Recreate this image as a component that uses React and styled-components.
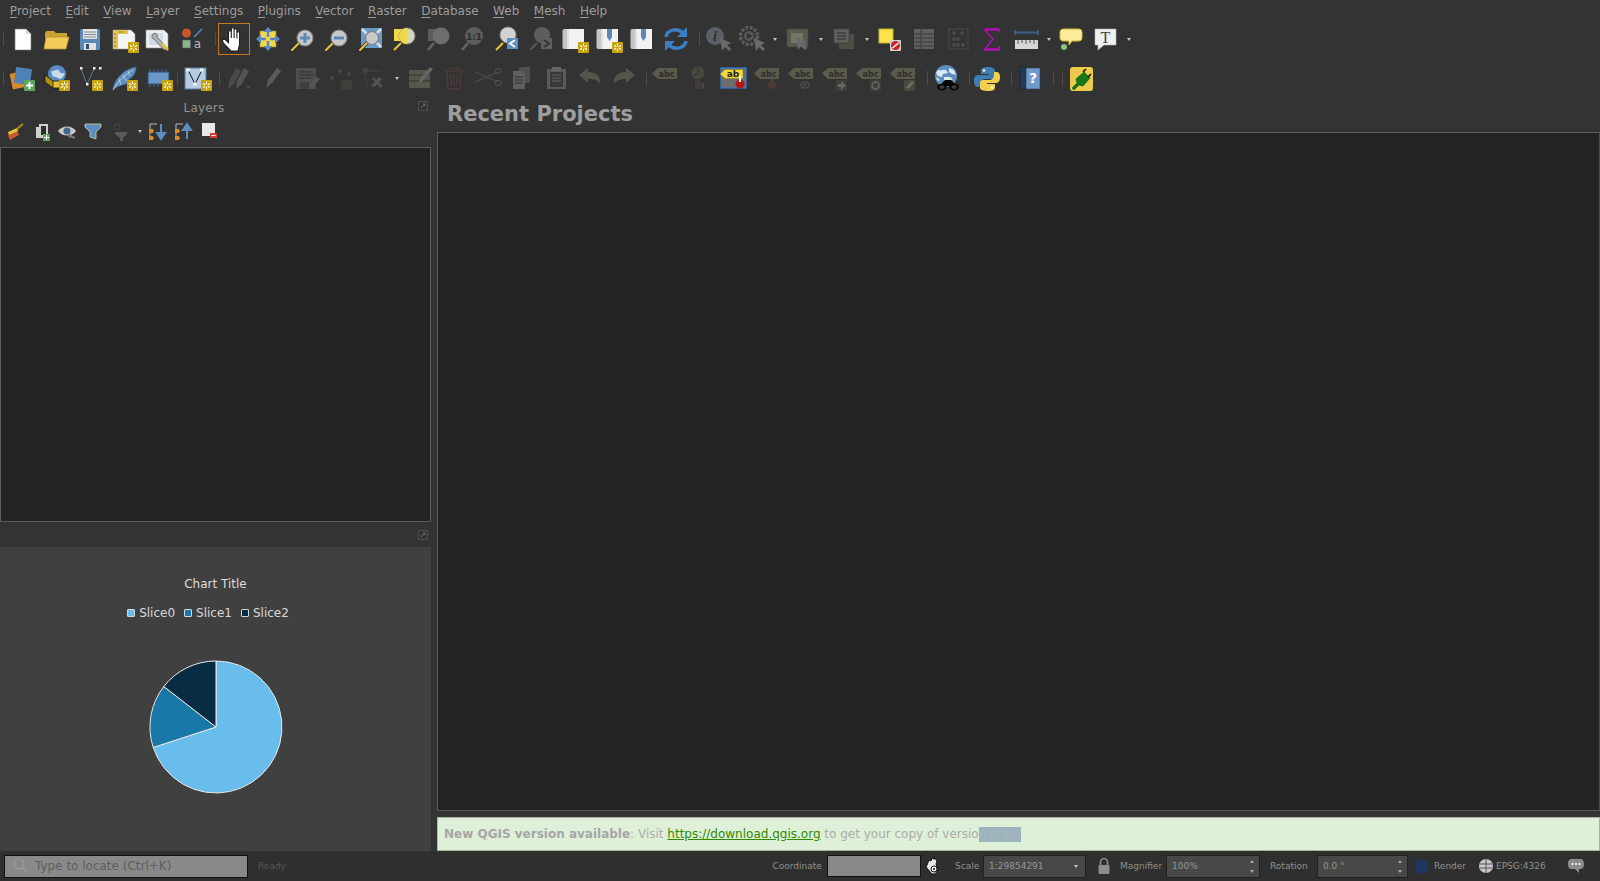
import React from "react";
import styled, { createGlobalStyle } from "styled-components";

const GlobalStyle = createGlobalStyle`
  html, body {
    margin: 0;
    padding: 0;
    height: 100%;
    background: #333333;
    font-family: "DejaVu Sans", sans-serif;
    overflow: hidden;
  }
`;

const Window = styled.div`
  width: 1600px;
  height: 881px;
  display: flex;
  flex-direction: column;
  background: #333333;
  color: #a0a0a0;
`;

const MenuBar = styled.div`
  height: 20px;
  box-sizing: border-box;
  padding-top: 1px;
  display: flex;
  align-items: center;
  padding-left: 2.600px;
  font-size: 12px;
`;

const MenuItem = styled.span`
  padding: 0 7.250px;
  color: #9c9c9c;
  u { text-underline-offset: 2px; }
`;

const ToolRow = styled.div`
  height: ${(p) => p.$h}px;
  display: flex;
  align-items: center;
`;

const ToolSlot = styled.div`
  width: ${(p) => p.$w || 34}px;
  height: 32px;
  flex: none;
  display: flex;
  align-items: center;
  justify-content: center;
  box-sizing: border-box;
  border: ${(p) => (p.$active ? "1px solid #c67a1b" : "none")};
  margin-right: ${(p) => (p.$active ? 1 : 0)}px;
  margin-left: ${(p) => (p.$active ? 1 : 0)}px;
  svg { display: block; flex: none; }
`;

const Sep = styled.div`
  width: ${(p) => p.$w}px;
  height: 14px;
  flex: none;
  display: flex;
  justify-content: flex-end;
  &::after {
    content: "";
    width: 1px;
    height: 14px;
    margin-right: 1px;
    background: #4c4c4c;
  }
`;

const Drop = styled.div`
  width: ${(p) => p.$w || 12}px;
  flex: none;
  display: flex;
  justify-content: center;
  &::after {
    content: "";
    border-left: 2px solid transparent;
    border-right: 2px solid transparent;
    border-top: 3px solid #c4c4c4;
  }
`;

const Workspace = styled.div`
  flex: 1;
  min-height: 0;
  display: flex;
`;

const Dock = styled.div`
  width: 431px;
  flex: none;
  display: flex;
  flex-direction: column;
`;

const DockHead = styled.div`
  height: 21px;
  box-sizing: border-box;
  padding-bottom: 1px;
  display: flex;
  align-items: center;
`;

const DockTitle = styled.span`
  flex: 1;
  text-align: center;
  font-size: 12px;
  color: #929292;
  padding-right: 7px;
  letter-spacing: 0.2px;
`;

const FloatBtn = styled.div`
  width: 16px;
  height: 16px;
  align-self: ${(p) => (p.$top ? "flex-start" : "auto")};
  display: flex;
  align-items: center;
  justify-content: center;
`;

const LayerTools = styled.div`
  height: 28px;
  box-sizing: border-box;
  padding-bottom: 4px;
  display: flex;
  align-items: center;
  padding-left: 2px;
`;

const Tree = styled.div`
  height: 375px;
  flex: none;
  box-sizing: border-box;
  background: #232323;
  border: 1px solid #5c5c5c;
`;

const FloatRow = styled.div`
  height: 25px;
  display: flex;
  align-items: center;
  justify-content: flex-end;
`;

const ChartPanel = styled.div`
  flex: 1;
  background: #404040;
  display: flex;
  flex-direction: column;
  align-items: center;
`;

const ChartTitle = styled.div`
  margin-top: 29px;
  height: 16px;
  font-size: 12px;
  line-height: 16px;
  color: #dcdcdc;
`;

const Legend = styled.div`
  margin-top: 13px;
  height: 16px;
  display: flex;
  align-items: center;
  gap: 9px;
  margin-left: -15px;
  font-size: 12px;
  color: #d8d8d8;
`;

const LegendItem = styled.div`
  display: flex;
  align-items: center;
  gap: 4px;
`;

const Swatch = styled.span`
  width: 6px;
  height: 6px;
  border: 1px solid #d0d8dc;
  border-radius: 1px;
  background: ${(p) => p.$c};
`;

const Pie = styled.svg`
  display: block;
  margin-top: 39px;
`;

const Main = styled.div`
  flex: 1;
  min-width: 0;
  margin-left: 6px;
  display: flex;
  flex-direction: column;
`;

const MainTitle = styled.div`
  height: 34px;
  padding-left: 10px;
  display: flex;
  align-items: center;
  font-size: 21px;
  font-weight: 700;
  color: #9e9e9e;
  padding-bottom: 2px;
  box-sizing: border-box;
`;

const ProjectList = styled.div`
  flex: 1;
  background: #232323;
  border: 1px solid #5c5c5c;
  border-right-color: #4a4a4a;
`;

const MessageBar = styled.div`
  margin-top: 6px;
  height: 34px;
  box-sizing: border-box;
  background: #dff0d8;
  border: 1px solid #a6b7a0;
  display: flex;
  align-items: center;
  padding-left: 6px;
  font-size: 12px;
  color: #acacac;
  white-space: pre;
  b { color: #a6a6a6; }
  a { color: #2f8a00; text-decoration: underline; }
`;

const Selected = styled.span`
  background: #9db3be;
  color: #a9b7be;
  height: 15px;
  line-height: 15px;
`;

const StatusBar = styled.div`
  height: 30px;
  flex: none;
  background: #2f2f2f;
  display: flex;
  align-items: center;
  font-size: 9px;
  color: #8f8f8f;
  white-space: nowrap;
  > * { flex: none; }
`;

const Locator = styled.div`
  width: 244px;
  height: 23px;
  margin-left: 4px;
  box-sizing: border-box;
  background: #898989;
  border: 1px solid #111111;
  display: flex;
  align-items: center;
  gap: 6px;
  padding-left: 6px;
  font-size: 12px;
  color: #5f5f5f;
`;

const Ready = styled.span`
  margin-left: 10px;
  width: 27px;
  color: #555555;
`;

const StatusLabel = styled.span`
  width: ${(p) => p.$w}px;
  margin-left: ${(p) => p.$ml || 0}px;
  color: #8f8f8f;
`;

const CoordInput = styled.div`
  width: 94px;
  height: 22px;
  margin-left: 4px;
  box-sizing: border-box;
  background: #888888;
  border: 1px solid #111111;
`;

const Spin = styled.div`
  width: ${(p) => p.$w}px;
  height: 23px;
  margin-left: ${(p) => p.$ml}px;
  box-sizing: border-box;
  background: #484848;
  border: 1px solid #222222;
  display: flex;
  align-items: center;
  justify-content: space-between;
  padding: 0 5px;
  color: #969696;
`;

const SpinArrows = styled.div`
  display: flex;
  flex-direction: column;
  gap: 7px;
  span {
    border-left: 2px solid transparent;
    border-right: 2px solid transparent;
  }
  span:first-child { border-bottom: 3px solid #a8a8a8; }
  span:last-child { border-top: 3px solid #a8a8a8; }
`;

const RenderBox = styled.span`
  width: 12px;
  height: 13px;
  margin-left: 7.500px;
  background: #1f3660;
`;

const StatusIcon = styled.svg`
  flex: none;
  display: block;
  margin-left: ${(p) => p.$ml || 0}px;
`;

const Abc = ({ fill = "#5b5a4d", ink = "#2e2e2e", children, y = 6 }) => (
  <g>
    <path d={`M9 ${y}h19v11H9l-6-5.500z`} fill={fill} />
    <text x="17.500" y={y + 8.500} fontFamily="DejaVu Sans" fontSize="8" fontWeight="700" fill={ink} textAnchor="middle">abc</text>
    {children}
  </g>
);

const Badge = ({ x = 19, y = 18 }) => (
  <g transform={`translate(${x} ${y})`}>
    <rect width="11" height="11" rx="1" fill="#c9a20c" />
    <path d="M5.500 1.500v8M2 3.500l7 4M9 3.500l-7 4" stroke="#fff" strokeWidth="1.100" />
    <circle cx="5.500" cy="5.500" r="1.500" fill="#c9a20c" />
  </g>
);

const Lens = ({ cx = 19, cy = 15, r = 8, fill = "#c9c9c9", edge = "#7d7d7d", handle = "#e8c83a", children }) => (
  <g>
    <path d="M6 27l7-7" stroke="#333" strokeWidth="3.500" strokeLinecap="round" />
    <path d="M6 27l7-7" stroke={handle} strokeWidth="2" strokeLinecap="round" />
    <circle cx={cx} cy={cy} r={r} fill={fill} stroke={edge} strokeWidth="1.200" />
    {children}
  </g>
);

const MapSheet = () => (
  <g>
    <path d="M9 6h17v20H9z" fill="#f2f2f2" />
    <path d="M6 6h4v20H6c-1 0-1.500-1-1.500-2V8c0-1 .5-2 1.500-2z" fill="#c4c4c4" />
    <path d="M9 6h2v20H9z" fill="#e0e0e0" />
  </g>
);

const Pin = () => <path d="M15 6h5v8l-2.500 4-2.500-4z" fill="#5c88b8" />;

const icons = {
  file: (
    <g>
      <path d="M9 6h11l5 5v16H9z" fill="#fff" stroke="#777" strokeWidth=".6" />
      <path d="M20 6v5h5z" fill="#d5d5d5" />
    </g>
  ),
  folder: (
    <g>
      <path d="M5 10l1-2h8l2 2h11v5H5z" fill="#c9a233" />
      <path d="M6 14h23l-3 12H4z" fill="#f1cd58" stroke="#b0902f" strokeWidth=".8" />
    </g>
  ),
  save: (
    <g>
      <rect x="6" y="6" width="20" height="21" rx="1.500" fill="#5c88b8" />
      <rect x="9" y="6" width="14" height="10" fill="#e4e4e4" />
      <path d="M10 9h12M10 11.500h12M10 14h12" stroke="#7a8a99" />
      <rect x="10" y="20" width="12" height="7" fill="#e0e0e0" />
      <rect x="12" y="21" width="3" height="5" fill="#36506e" />
    </g>
  ),
  newLayout: (
    <g>
      <path d="M5 7h18l4 4v15H5z" fill="#f4f4f4" stroke="#9a9a9a" strokeWidth=".6" />
      <path d="M5 7h15v4H10v15H5z" fill="#e6c454" />
      <path d="M7 10v2M7 14v2M7 18v2M7 22v2M12 8v2M15 8v2" stroke="#8f7420" />
      <Badge x={20} y={19} />
    </g>
  ),
  layoutMgr: (
    <g>
      <path d="M4 7h18l4 4v14H4z" fill="#f0f0f0" stroke="#9a9a9a" strokeWidth=".6" />
      <rect x="7" y="10" width="14" height="12" fill="#cfdbe8" />
      <path d="M11 11c3-2 5 0 4 3l10 11-3 2-10-11c-2 0-3-2-1-5z" fill="#b0b0b0" stroke="#555" strokeWidth=".7" />
      <path d="M20 21l6 6" stroke="#e0c33a" strokeWidth="2.500" />
    </g>
  ),
  style: (
    <g>
      <circle cx="10.500" cy="10" r="4.500" fill="#c8582a" />
      <path d="M18 14l8-8" stroke="#5c88b8" strokeWidth="1.600" />
      <rect x="6.500" y="17" width="8" height="8" fill="#8ab58c" stroke="#556" strokeWidth=".5" />
      <text x="21.500" y="25" fontFamily="DejaVu Sans" fontSize="12" fill="#b9b9b9" textAnchor="middle">a</text>
    </g>
  ),
  hand: (
    <path d="M13 28c-2-3-8-7-8.500-10-.3-1.700 1.800-2.300 3.300-1l2.700 2.600V9c0-1.700 2.600-1.700 2.800 0v6V6c0-1.700 2.800-1.700 2.800 0v9V7c0-1.700 2.800-1.700 2.800 0v8.500-5.500c0-1.700 2.700-1.700 2.700 0v10c0 3-1 5-1.600 8z" fill="#fff" stroke="#1c1c1c" strokeWidth="1.100" />
  ),
  panSel: (
    <g>
      <rect x="8" y="8" width="16" height="16" fill="#f1d84a" stroke="#a08f2a" strokeWidth=".6" />
      <path d="M16 4l4.500 5h-9zM16 28l4.500-5h-9zM4 16l5-4.500v9zM28 16l-5-4.500v9z" fill="#5c88c4" />
      <path d="M16 9v5M16 18v5M9 16h5M18 16h5" stroke="#5c88c4" strokeWidth="2.500" />
    </g>
  ),
  zoomIn: (
    <Lens>
      <path d="M14 15h10M19 10v10" stroke="#5c88b8" strokeWidth="3" />
    </Lens>
  ),
  zoomOut: (
    <Lens>
      <path d="M14 15h10" stroke="#5c88b8" strokeWidth="3" />
    </Lens>
  ),
  zoomFull: (
    <g>
      <rect x="7" y="5" width="21" height="20" fill="#6c9ac9" />
      <path d="M8 6l6 6M27 6l-6 6M27 24l-6-6" stroke="#cfe0f0" strokeWidth="2.500" />
      <Lens cx={18} cy={15} r={6.500} />
    </g>
  ),
  zoomSel: (
    <g>
      <rect x="6" y="6" width="10" height="12" fill="#f1d84a" />
      <path d="M6 27l7-7" stroke="#e8c83a" strokeWidth="2" />
      <circle cx="19" cy="13" r="8" fill="#d7d7c0" stroke="#888" />
      <path d="M19 5a8 8 0 0 0 0 16z" fill="#f1d84a" />
    </g>
  ),
  zoomLayer: (
    <g>
      <path d="M6 27l6-7" stroke="#666" strokeWidth="2.500" />
      <rect x="6" y="6" width="10" height="12" fill="#5c5c5c" />
      <circle cx="19" cy="13" r="8.500" fill="#6d6d6d" />
    </g>
  ),
  zoomNative: (
    <g>
      <path d="M6 27l6-7" stroke="#666" strokeWidth="2.500" />
      <circle cx="18" cy="13" r="9" fill="#5c5c5c" />
      <text x="18" y="17" fontFamily="DejaVu Sans" fontSize="9" fontWeight="700" fill="#2e2e2e" textAnchor="middle">1:1</text>
    </g>
  ),
  zoomLast: (
    <g>
      <path d="M6 27l7-7" stroke="#e8c83a" strokeWidth="2" />
      <circle cx="18" cy="12" r="8" fill="#d2d2d2" stroke="#8a8a8a" />
      <rect x="17" y="15" width="11" height="11" fill="#5c8fc4" />
      <path d="M25 17l-5 3.500 5 3.500" stroke="#fff" strokeWidth="1.800" fill="none" />
    </g>
  ),
  zoomNext: (
    <g>
      <path d="M6 27l7-7" stroke="#5a5a5a" strokeWidth="2" />
      <circle cx="18" cy="12" r="8" fill="#5d5d5d" />
      <rect x="17" y="15" width="11" height="11" fill="#5f5f5f" />
      <path d="M20 17l5 3.500-5 3.500" stroke="#333" strokeWidth="1.800" fill="none" />
    </g>
  ),
  bookmarkNew: (
    <g>
      <MapSheet />
      <Badge x={20} y={19} />
    </g>
  ),
  bookmarkShow: (
    <g>
      <MapSheet />
      <Pin />
      <Badge x={20} y={19} />
    </g>
  ),
  bookmarks: (
    <g>
      <MapSheet />
      <Pin />
    </g>
  ),
  refresh: (
    <g fill="none" stroke="#3a7fc4" strokeWidth="3.500">
      <path d="M6 14c1-7 11-10 17-4" />
      <path d="M26 18c-1 7-11 10-17 4" />
      <path d="M27 4v10H17z" fill="#3a7fc4" stroke="none" />
      <path d="M5 28V18h10z" fill="#3a7fc4" stroke="none" />
    </g>
  ),
  identify: (
    <g>
      <circle cx="13" cy="13" r="9" fill="#5b6068" />
      <text x="13" y="18" fontFamily="Liberation Serif" fontSize="14" fontWeight="700" fontStyle="italic" fill="#2e2e2e" textAnchor="middle">i</text>
      <path d="M18 15l2 13 3-4 4 4 2-2-4-4 4-2z" fill="#6a6a6a" />
    </g>
  ),
  action: (
    <g>
      <circle cx="13" cy="13" r="8.500" fill="none" stroke="#5c5c5c" strokeWidth="3.500" strokeDasharray="3 1.500" />
      <circle cx="13" cy="13" r="5" fill="#555" />
      <path d="M11 10l5 3-5 3z" fill="#2f2f2f" />
      <path d="M18 15l2 13 3-4 4 4 2-2-4-4 4-2z" fill="#6a6a6a" />
    </g>
  ),
  select: (
    <g>
      <rect x="5" y="6" width="21" height="18" fill="#5a5a4d" stroke="#444" strokeDasharray="2 1" />
      <rect x="9" y="10" width="12" height="10" fill="#767664" />
      <path d="M14 14l2 13 3-4 4 4 2-2-4-4 4-2z" fill="#6a6a6a" />
    </g>
  ),
  stack: (
    <g>
      <rect x="11" y="11" width="15" height="15" fill="#4e4e44" />
      <rect x="6" y="6" width="15" height="14" fill="#5f5f5f" stroke="#444" />
      <path d="M9 10h9M9 13h9M9 16h9" stroke="#3c3c3c" strokeWidth="1.500" />
    </g>
  ),
  deselect: (
    <g>
      <rect x="5" y="6" width="14" height="14" fill="#fbe34b" stroke="#c4b23a" />
      <rect x="16" y="17" width="11" height="11" rx="1" fill="#d1d1d1" />
      <circle cx="21.500" cy="22.500" r="4.500" fill="#c8242c" />
      <path d="M18.500 25l6-5" stroke="#fff" strokeWidth="1.500" />
    </g>
  ),
  table: (
    <g>
      <rect x="6" y="6" width="20" height="20" fill="#5f5f5f" />
      <path d="M6 11h20M6 15h20M6 19h20M6 23h20M13 6v20" stroke="#3c3c3c" />
    </g>
  ),
  abacus: (
    <g fill="#4a4a46">
      <path d="M6 6h20M6 26h21M7 6v20M26 6v20" stroke="#4b4b47" fill="none" />
      <circle cx="12" cy="10" r="2" />
      <circle cx="20" cy="10" r="2" />
      <circle cx="12" cy="16" r="2" />
      <circle cx="16" cy="16" r="2" />
      <circle cx="12" cy="22" r="2" />
      <circle cx="16" cy="22" r="2" />
      <circle cx="21" cy="22" r="2" />
    </g>
  ),
  sigma: <path d="M23 9V6H9v1l8 9-8 10v1h14v-4M10 7h12M10 26h13" fill="none" stroke="#b010b0" strokeWidth="1.600" />,
  measure: (
    <g>
      <path d="M5 7v5M28 7v5M5 9.500h23" stroke="#3f5f85" strokeWidth="1.800" />
      <rect x="5" y="17" width="23" height="9" fill="#d6d6d6" />
      <path d="M8 17v4M12 17v3M16 17v4M20 17v3M24 17v4" stroke="#555" />
    </g>
  ),
  tip: (
    <g>
      <path d="M8 6h14c3 0 4 1 4 4v4c0 3-1 4-4 4h-6l-3 4v-4H8c-3 0-4-1-4-4v-4c0-3 1-4 4-4z" fill="#fbeb9b" stroke="#d5ba39" />
      <circle cx="8" cy="24" r="3" fill="#8fc08a" />
    </g>
  ),
  textNote: (
    <g>
      <path d="M5 6h21v16H14l-6 5v-5H5z" fill="#eef0f2" stroke="#b5b5b5" strokeWidth=".6" />
      <text x="15.500" y="20" fontFamily="Liberation Serif" fontSize="16" fill="#444" textAnchor="middle">T</text>
    </g>
  ),
  dataSource: (
    <g>
      <rect x="5" y="10" width="17" height="16" rx="1" fill="#d68a2d" transform="rotate(-12 13 18)" />
      <rect x="9" y="6" width="16" height="16" fill="#4f82b8" transform="rotate(8 17 14)" />
      <rect x="18" y="18" width="11" height="11" rx="1" fill="#5da45c" />
      <path d="M23.500 20v7M20 23.500h7" stroke="#fff" strokeWidth="2" />
    </g>
  ),
  geoPackage: (
    <g>
      <circle cx="17" cy="12" r="9" fill="#5c8bc0" />
      <path d="M11 9c3 1 4-2 7-1s1 4 5 3-1 6-3 6-4-3-7-2z" fill="#c6dbee" />
      <path d="M5 13l8 6h15v7H13l-8-6z" fill="#e3c53a" stroke="#171717" strokeWidth=".8" />
      <path d="M13 19v7l-8-6v-7z" fill="#b09410" stroke="#171717" strokeWidth=".8" />
      <Badge x={19} y={18} />
    </g>
  ),
  vertex: (
    <g>
      <path d="M7 7l6 15 7-15" stroke="#5d7690" fill="none" />
      <rect x="6" y="5" width="2.500" height="2.500" fill="#eee" />
      <rect x="12" y="21" width="2.500" height="2.500" fill="#eee" />
      <rect x="19" y="5" width="2.500" height="2.500" fill="#eee" />
      <rect x="25" y="5" width="2.500" height="2.500" fill="#eee" />
      <Badge x={18} y={18} />
    </g>
  ),
  feather: (
    <g>
      <path d="M5 28C6 17 16 7 28 5c0 6-3 10-7 12l-3 5c-5 1-8 2-13 6z" fill="#5f8fbf" stroke="#3f6f9f" strokeWidth=".6" />
      <path d="M5 28C11 18 18 12 25 8M11 17l2 6M15 13l3 6M20 9l2 5" stroke="#c4d8ea" strokeWidth=".8" fill="none" />
      <Badge x={19} y={18} />
    </g>
  ),
  chip: (
    <g>
      <rect x="6" y="10" width="21" height="12" fill="#6b97c6" stroke="#2d4d70" />
      <path d="M8 7v3M12 7v3M16 7v3M20 7v3M24 7v3M8 22v3M12 22v3M16 22v3" stroke="#4b6b8a" />
      <Badge x={20} y={18} />
    </g>
  ),
  vBox: (
    <g>
      <rect x="5" y="6" width="21" height="21" fill="#b4cbe2" stroke="#5b7c9d" />
      <path d="M8 8l7 14 7-14" stroke="#111" fill="none" />
      <rect x="6.500" y="6.500" width="3" height="3" fill="#fff" />
      <rect x="20" y="6.500" width="3" height="3" fill="#fff" />
      <rect x="13.500" y="20.500" width="3" height="3" fill="#fff" />
      <Badge x={21} y={18} />
    </g>
  ),
  pencils: (
    <g>
      <path d="M6 27l1-8 7-13 5 3-7 13z" fill="#4a4a4a" />
      <path d="M14 27l1-8 7-13 5 3-7 13z" fill="#545454" />
      <path d="M24 24h5l-2.500 3z" fill="#4a4a4a" />
    </g>
  ),
  pencil: <path d="M10 26l2-8 9-12 4 3-9 12z" fill="#5a5a5a" />,
  saveEdit: (
    <g>
      <rect x="6" y="6" width="20" height="21" fill="#4e4e4e" />
      <path d="M9 10h14M9 13h14M9 16h12" stroke="#2f2f2f" />
      <rect x="10" y="20" width="9" height="7" fill="#3f3f3f" />
      <path d="M19 26l1-4 7-7 3 2-7 7z" fill="#565656" />
    </g>
  ),
  dots: (
    <g fill="#474742">
      <circle cx="8" cy="16" r="2" />
      <circle cx="16" cy="9" r="2" />
      <circle cx="25" cy="12" r="2" />
      <rect x="17" y="18" width="11" height="10" rx="1" fill="#3f3f3a" />
    </g>
  ),
  nodes: (
    <g>
      <rect x="6" y="7" width="3" height="3" fill="none" stroke="#545454" />
      <path d="M9 9h14M7 10l2 16" stroke="#424242" />
      <path d="M13 24l8-9 3 2-7 8zM16 15l9 9-2 2-9-9z" fill="#525252" />
    </g>
  ),
  editTable: (
    <g>
      <rect x="5" y="8" width="21" height="18" fill="#56564a" />
      <path d="M5 13h21M5 19h21" stroke="#333" />
      <path d="M14 22l3-7 9-10 3 2-9 11z" fill="#646464" />
    </g>
  ),
  trash: (
    <g fill="none" stroke="#4d3a3a" strokeWidth="1.600">
      <path d="M7 9h18M12 9V6h8v3" />
      <path d="M9 9l1 18h12l1-18M13 12v12M16 12v12M19 12v12" />
    </g>
  ),
  scissors: (
    <g fill="none" stroke="#4c4c4c" strokeWidth="1.200">
      <path d="M3 10l23 10M3 20l23-10" />
      <ellipse cx="26" cy="21" rx="3" ry="2.500" />
      <ellipse cx="26" cy="9" rx="3" ry="2.500" />
    </g>
  ),
  copy: (
    <g>
      <rect x="13" y="5" width="11" height="16" fill="#505050" />
      <path d="M7 9h9l3 3v15H7z" fill="#5e5e5e" />
      <path d="M9 15h8M9 18h8M9 21h8" stroke="#333" />
    </g>
  ),
  paste: (
    <g>
      <rect x="7" y="7" width="19" height="20" fill="#5a5a5a" />
      <rect x="10" y="10" width="13" height="15" fill="#393939" />
      <rect x="12" y="5" width="9" height="4" fill="#646464" />
      <path d="M12 13h9M12 16h9M12 19h9" stroke="#666" />
    </g>
  ),
  undo: <path d="M5 13l9-7v4c8 0 13 4 12 12-2-4-6-5-12-5v4z" fill="#55554c" />,
  redo: <path d="M27 13l-9-7v4c-8 0-13 4-12 12 2-4 6-5 12-5v4z" fill="#55554c" />,
  abc: <Abc />,
  labelPie: (
    <g>
      <circle cx="15" cy="11" r="6.500" fill="#48483f" />
      <path d="M15 4.500v7l-5 3" stroke="#333" fill="none" />
      <rect x="12" y="18" width="5" height="9" fill="#4a3a3a" />
      <rect x="18" y="21" width="3" height="6" fill="#3f4a3f" />
    </g>
  ),
  abcActive: (
    <g>
      <rect x="4" y="6" width="25" height="20" fill="#6d6d6d" stroke="#2f7be0" strokeWidth="1.200" />
      <path d="M8 7.500h18v9H8l-5-4.500z" fill="#f7d83a" stroke="#8a7512" strokeWidth=".5" />
      <text x="16" y="15" fontFamily="DejaVu Sans" fontSize="9" fontWeight="700" fill="#222" textAnchor="middle">ab</text>
      <circle cx="23" cy="22" r="4.500" fill="#b01818" />
      <path d="M22 14h2v6h-2z" fill="#eee" />
    </g>
  ),
  abcPin: (
    <Abc>
      <path d="M21 16v5" stroke="#555" />
      <circle cx="21" cy="23" r="4" fill="#4d3838" />
    </Abc>
  ),
  abcEye: (
    <Abc>
      <ellipse cx="20" cy="23" rx="4" ry="3" fill="none" stroke="#4f4f4f" strokeWidth="1.500" />
      <circle cx="20" cy="23" r="1.300" fill="#4f4f4f" />
    </Abc>
  ),
  abcMove: (
    <Abc>
      <rect x="17" y="18" width="11" height="11" rx="1" fill="#3f3f3a" />
      <path d="M19 22h3v-3l5 4.500-5 4.500v-3h-3z" fill="#666" />
    </Abc>
  ),
  abcRotate: (
    <Abc>
      <rect x="17" y="18" width="11" height="11" rx="1" fill="#3f3f3a" />
      <circle cx="22.500" cy="23.500" r="3.500" fill="none" stroke="#666" strokeWidth="1.500" />
    </Abc>
  ),
  abcEdit: (
    <Abc>
      <rect x="17" y="18" width="11" height="11" rx="1" fill="#4a4a3c" />
      <path d="M19 27l1-3 5-5 2 2-5 5z" fill="#6d6d6d" />
    </Abc>
  ),
  globeSearch: (
    <g>
      <circle cx="16" cy="14" r="11" fill="#5e8ec0" />
      <path d="M8 8c3 1 5-1 8 0l2 3-5 1-1 3-4-1-2-3zM19 6l5 2 2 5-4-1-3-2zM14 15h6l3 2-3 2h-6zM6 15l3 2 1 2-3-1z" fill="#dbe7f1" />
      <ellipse cx="12" cy="25" rx="5" ry="3.500" fill="#0d0d0d" />
      <ellipse cx="24" cy="25" rx="5" ry="3.500" fill="#0d0d0d" />
      <path d="M12 21l3-3h6l3 3v3H12z" fill="#000" />
      <ellipse cx="12" cy="25" rx="2.500" ry="1.800" fill="#3d3d3d" />
      <ellipse cx="24" cy="25" rx="2.500" ry="1.800" fill="#3d3d3d" />
    </g>
  ),
  python: (
    <g>
      <path d="M16 5c-5 0-7 1-7 4v3h8v1H6c-3 0-4 3-4 6s1 6 4 6h3v-4c0-3 2-4 5-4h6c2 0 3-1 3-3V9c0-3-3-4-7-4z" fill="#3f7cb0" />
      <path d="M16 29c5 0 7-1 7-4v-3h-8v-1h9c3 0 4-3 4-6s-1-5-4-5h-2v3c0 3-2 5-5 5h-6c-2 0-3 1-3 3v5c0 2 4 3 8 3z" fill="#f2d04f" />
      <circle cx="12" cy="8.500" r="1.200" fill="#fff" />
      <circle cx="20" cy="25.500" r="1.200" fill="#fff" />
    </g>
  ),
  help: (
    <g>
      <rect x="6" y="5" width="6" height="22" fill="#233b55" stroke="#1c2a3a" />
      <rect x="12" y="6" width="14" height="21" fill="#6f9bcc" stroke="#2c4158" strokeWidth=".6" />
      <text x="19" y="21" fontFamily="DejaVu Sans" fontSize="14" fontWeight="700" fill="#fff" textAnchor="middle">?</text>
    </g>
  ),
  plugin: (
    <g>
      <rect x="5" y="5" width="23" height="24" rx="3" fill="#ecca4a" />
      <path d="M7 26l5-5-1-4 8-7 6 6-7 8-4-1-5 5z" fill="#157a18" stroke="#0c4f10" strokeWidth=".6" />
      <path d="M18 10l3-3M23 15l3-3" stroke="#111" strokeWidth="1.600" />
    </g>
  ),
};

const smallIcons = {
  brush: (
    <g>
      <path d="M3 14l9-5 2 5-9 5z" fill="#c8582a" />
      <path d="M3 11l9-4 1 3-9 4z" fill="#e0c33a" />
      <path d="M12 8l6-5" stroke="#b09020" strokeWidth="2" />
    </g>
  ),
  addGroup: (
    <g>
      <path d="M5 6h3V3h9v14H5z" fill="#d0d0d0" />
      <path d="M10 5h5v9h-5z" fill="#2f2f2f" />
      <rect x="12" y="13" width="7" height="7" fill="#5da45c" />
      <path d="M15.500 14v5M13 16.500h5" stroke="#fff" />
    </g>
  ),
  eye: (
    <g>
      <path d="M1 10c4-6 14-6 18 0-4 6-14 6-18 0z" fill="#c8c8c8" />
      <circle cx="10" cy="10" r="3.500" fill="#43678c" />
      <path d="M12 13l6 3v2l-7-2z" fill="#777" />
    </g>
  ),
  funnel: <path d="M2 3h16v3l-5 5v7l-6-2v-5L2 6z" fill="#5c8ec4" stroke="#eee0a0" strokeWidth=".7" />,
  filterDim: (
    <g>
      <circle cx="6" cy="6" r="3" fill="none" stroke="#454545" />
      <path d="M4 11h12v2l-4 4v3H9v-3l-5-4z" fill="#5a5a5a" />
    </g>
  ),
  expand: (
    <g>
      <path d="M3 3h7M3 3v14M3 10h4M3 17h4" stroke="#bbb" />
      <rect x="2" y="8" width="4" height="4" fill="#d88b2d" />
      <rect x="2" y="15" width="4" height="4" fill="#d88b2d" />
      <path d="M14 3v10M10 12l4 6 4-6z" fill="#5c8ec4" stroke="#5c8ec4" strokeWidth="2" />
    </g>
  ),
  collapse: (
    <g>
      <path d="M3 3h7M3 3v14M3 10h4M3 17h4" stroke="#bbb" />
      <rect x="2" y="8" width="4" height="4" fill="#d88b2d" />
      <rect x="2" y="15" width="4" height="4" fill="#d88b2d" />
      <path d="M14 18V8M10 9l4-6 4 6z" fill="#5c8ec4" stroke="#5c8ec4" strokeWidth="2" />
    </g>
  ),
  removeLayer: (
    <g>
      <rect x="3" y="2" width="13" height="13" fill="#e8e8e8" />
      <rect x="11" y="12" width="7" height="5" fill="#d43c3c" />
      <path d="M12.500 14.500h4" stroke="#fff" />
    </g>
  ),
};

const Icon = ({ name }) => (
  <svg width="32" height="32" viewBox="0 0 32 32">{icons[name]}</svg>
);

const SmallIcon = ({ name }) => (
  <svg width="20" height="20" viewBox="0 0 20 20">{smallIcons[name]}</svg>
);

const row1 = [
  [0, 5], "file", "folder", "save", "newLayout", "layoutMgr", "style", [1, 8],
  "hand!", "panSel", "zoomIn", "zoomOut", "zoomFull", "zoomSel", "zoomLayer", "zoomNative",
  "zoomLast", "zoomNext", "bookmarkNew", "bookmarkShow", "bookmarks", "refresh", [1, 8],
  "identify", "action", "v", "select", "v", "stack", "v", "deselect", "table", "abacus",
  "sigma", "measure", "v", "tip", "textNote", "v",
];

const row2 = [
  [0, 5], "dataSource", "geoPackage", "vertex", "feather", "chip", [1, 4], "vBox", [1, 8],
  "pencils", "pencil", "saveEdit", "dots", "nodes", "v", "editTable", "trash", "scissors",
  "copy", "paste", "undo", "redo", [1, 7], "abc", "labelPie", "abcActive", "abcPin", "abcEye",
  "abcMove", "abcRotate", "abcEdit", [1, 9], "globeSearch", [1, 8], "python", [1, 8], "help",
  [1, 8], [1, 9], "plugin",
];

const renderTools = (items) =>
  items.map((item, i) => {
    if (Array.isArray(item)) {
      return <Sep key={i} $w={item[1]} />;
    }
    if (item === "v") {
      return <Drop key={i} />;
    }
    const active = item.endsWith("!");
    return (
      <ToolSlot key={i} $active={active} $w={active ? 32 : 34}>
        <Icon name={active ? item.slice(0, -1) : item} />
      </ToolSlot>
    );
  });

const menus = ["Project", "Edit", "View", "Layer", "Settings", "Plugins", "Vector", "Raster", "Database", "Web", "Mesh", "Help"];

const FloatIcon = () => (
  <svg width="10" height="10" viewBox="0 0 10 10">
    <rect x=".5" y=".5" width="9" height="9" fill="none" stroke="#5c5c5c" strokeDasharray="2 1" />
    <path d="M3 7l4-4M5 3h2v2" stroke="#6d6d6d" fill="none" />
  </svg>
);

export default function App() {
  return (
    <Window>
      <GlobalStyle />
      <MenuBar>
        {menus.map((m) => (
          <MenuItem key={m}>
            <u>{m[0]}</u>
            {m.slice(1)}
          </MenuItem>
        ))}
      </MenuBar>
      <ToolRow $h={38}>{renderTools(row1)}</ToolRow>
      <ToolRow $h={40}>{renderTools(row2)}</ToolRow>
      <Workspace>
        <Dock>
          <DockHead>
            <DockTitle>Layers</DockTitle>
            <FloatBtn $top>
              <FloatIcon />
            </FloatBtn>
          </DockHead>
          <LayerTools>
            <ToolSlot $w={26}><SmallIcon name="brush" /></ToolSlot>
            <ToolSlot $w={26}><SmallIcon name="addGroup" /></ToolSlot>
            <ToolSlot $w={26}><SmallIcon name="eye" /></ToolSlot>
            <ToolSlot $w={26}><SmallIcon name="funnel" /></ToolSlot>
            <ToolSlot $w={30}><SmallIcon name="filterDim" /></ToolSlot>
            <Drop $w={8} />
            <ToolSlot $w={26}><SmallIcon name="expand" /></ToolSlot>
            <ToolSlot $w={26}><SmallIcon name="collapse" /></ToolSlot>
            <ToolSlot $w={26}><SmallIcon name="removeLayer" /></ToolSlot>
          </LayerTools>
          <Tree />
          <FloatRow>
            <FloatBtn>
              <FloatIcon />
            </FloatBtn>
          </FloatRow>
          <ChartPanel>
            <ChartTitle>Chart Title</ChartTitle>
            <Legend>
              <LegendItem><Swatch $c="#68bdec" />Slice0</LegendItem>
              <LegendItem><Swatch $c="#1878a8" />Slice1</LegendItem>
              <LegendItem><Swatch $c="#0a2c42" />Slice2</LegendItem>
            </Legend>
            <Pie width="134" height="134" viewBox="-67 -67 134 134">
              <g stroke="#e8e8e8" strokeWidth="1">
                <path d="M0 0V-66A66 66 0 1 1 -62.800 20.400Z" fill="#68bdec" />
                <path d="M0 0L-62.800 20.400A66 66 0 0 1 -52.200 -40.500Z" fill="#1878a8" />
                <path d="M0 0L-52.200 -40.500A66 66 0 0 1 0 -66Z" fill="#0a2c42" />
              </g>
            </Pie>
          </ChartPanel>
        </Dock>
        <Main>
          <MainTitle>Recent Projects</MainTitle>
          <ProjectList />
          <MessageBar>
            <b>New QGIS version available</b>: Visit <a>https://download.qgis.org</a> to get your copy of versio<Selected>n 3.8.0</Selected>
          </MessageBar>
        </Main>
      </Workspace>
      <StatusBar>
        <Locator>
          <svg width="18" height="18" viewBox="0 0 18 18">
            <circle cx="8" cy="7" r="5" fill="none" stroke="#9c9c9c" strokeWidth="1.200" />
            <path d="M12 11l4 4" stroke="#9c9c9c" strokeWidth="1.500" />
          </svg>
          Type to locate (Ctrl+K)
        </Locator>
        <Ready>Ready</Ready>
        <StatusLabel $w={50} $ml={487.500}>Coordinate</StatusLabel>
        <CoordInput />
        <StatusIcon width="18" height="20" viewBox="0 0 18 20" $ml={3.500}>
          <path d="M3 9l2-5 2 1 1-3 2 1 2 0 1 2-1 3 2 6-3 4H8L2 11z" fill="#e8e8e8" stroke="#111" />
          <circle cx="10" cy="13" r="3" fill="#fff" stroke="#111" />
          <circle cx="10" cy="13" r="1" fill="#111" />
        </StatusIcon>
        <StatusLabel $w={24} $ml={13}>Scale</StatusLabel>
        <Spin $w={103} $ml={4}>
          1:29854291
          <Drop $w={8} />
        </Spin>
        <StatusIcon width="14" height="18" viewBox="0 0 14 18" $ml={11}>
          <path d="M3.500 9V5a3.500 3.500 0 0 1 7 0v4" fill="none" stroke="#8c8c8c" strokeWidth="1.600" />
          <rect x="1.500" y="8" width="11" height="9" rx="1" fill="#8c8c8c" />
        </StatusIcon>
        <StatusLabel $w={42} $ml={9}>Magnifier</StatusLabel>
        <Spin $w={94} $ml={4}>
          100%
          <SpinArrows><span /><span /></SpinArrows>
        </Spin>
        <StatusLabel $w={37} $ml={10}>Rotation</StatusLabel>
        <Spin $w={91} $ml={10}>
          0.0 °
          <SpinArrows><span /><span /></SpinArrows>
        </Spin>
        <RenderBox />
        <StatusLabel $w={32} $ml={6.500}>Render</StatusLabel>
        <StatusIcon width="16" height="16" viewBox="0 0 16 16" $ml={12}>
          <circle cx="8" cy="8" r="7" fill="#c8c8c8" />
          <path d="M2 6h12M2 10h12M8 1v14" stroke="#555" />
        </StatusIcon>
        <StatusLabel $w={49} $ml={2}>EPSG:4326</StatusLabel>
        <StatusIcon width="18" height="18" viewBox="0 0 18 18" $ml={22}>
          <path d="M5 2h8c3 0 4 2 4 5s-1 5-4 5h-1v4l-4-4H5c-3 0-4-2-4-5s1-5 4-5z" fill="#8c8c8c" />
          <circle cx="5.500" cy="7" r="1.100" fill="#fff" />
          <circle cx="9" cy="7" r="1.100" fill="#fff" />
          <circle cx="12.500" cy="7" r="1.100" fill="#fff" />
        </StatusIcon>
      </StatusBar>
    </Window>
  );
}
